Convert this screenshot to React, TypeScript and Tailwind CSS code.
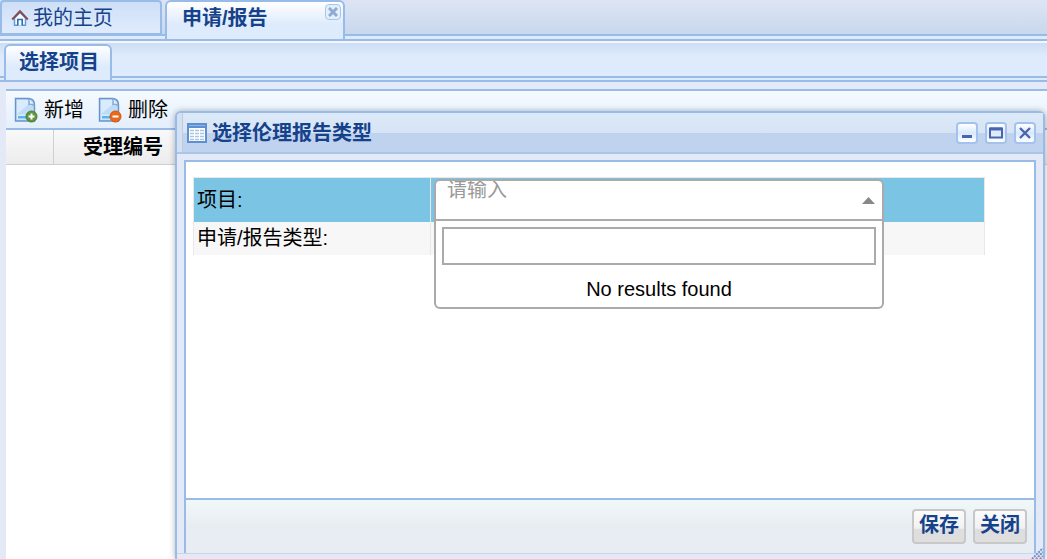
import type { ReactNode } from "react";

const HomeIcon = () => (
  <svg width="18" height="18" viewBox="0 0 18 18" fill="none" aria-hidden="true">
    <path d="M3.5 9V16.2H14.5V9L9 3.5Z" fill="#f3f9ff" stroke="#5f9ad6" strokeWidth="1.4" />
    <path d="M6.8 16.5V10.5H11.2V16.5" fill="#fff" stroke="#2f6db5" strokeWidth="1.6" />
    <path d="M1.2 10.500L9 2.200L16.800 10.500" stroke="#8a4a50" strokeWidth="2" />
  </svg>
);

const PageIcon = ({ color, dark, plus }: { color: string; dark: string; plus?: boolean }) => (
  <svg width="24" height="26" viewBox="0 0 24 26" fill="none" aria-hidden="true">
    <path d="M1.5 1.5H15Q20.500 2 20.500 8V24H1.5Z" fill="#bedcf8" stroke="#6a94c8" strokeWidth="1.4" />
    <path d="M3 3H14V8L3 17Z" fill="#d9ebfc" />
    <path d="M3 17.500H19V22.500H3Z" fill="#d8ecfc" />
    <path d="M4 19H17V21.500H4Z" fill="#58b4f0" />
    <path d="M14 1.5Q16 4 15 7.500Q18 6.500 20.500 9" fill="#f7fbff" stroke="#7fa6d6" strokeWidth="1.2" />
    <circle cx="17.500" cy="19.500" r="5.500" fill={color} stroke={dark} strokeWidth="1" />
    <path d={plus ? "M14.500 19.500H20.500M17.500 16.500V22.500" : "M14.500 19.500H20.500"} stroke="#fff" strokeWidth="2" />
  </svg>
);

const TableIcon = () => (
  <svg width="20" height="20" viewBox="0 0 20 20" fill="none" aria-hidden="true">
    <path d="M1 1H19V19H1Z" fill="#fff" stroke="#5d8fd1" strokeWidth="2" />
    <path d="M1 1H19V5H1Z" fill="#5d8fd1" />
    <path d="M2 2.500H18" stroke="#8db5ea" />
    <path d="M3 7.500H7M8 7.500H12M13 7.500H17M3 10.500H7M8 10.500H12M13 10.500H17M3 13.500H7M8 13.500H12M13 13.500H17M3 16.500H7M8 16.500H12M13 16.500H17" stroke="#a9c3e4" strokeWidth="1.4" />
  </svg>
);

const ToolButton = ({ label, children }: { label: string; children: ReactNode }) => (
  <button
    type="button"
    aria-label={label}
    className="flex h-[22px] w-[22px] items-center justify-center rounded border-2 border-[#a3c3ee] bg-linear-to-b from-white via-[#d9e9fb] to-white"
  >
    <svg className="shrink-0" width="16" height="16" viewBox="0 0 16 16" fill="none" stroke="#4a64b0">
      {children}
    </svg>
  </button>
);

const ActionButton = ({ children }: { children: ReactNode }) => (
  <button
    type="button"
    className="h-[35px] w-[54px] rounded border-2 border-[#c8c8c8] bg-linear-to-b from-[#fbfbfb] from-0% via-[#f1f1f1] via-55% to-[#dedede] to-60% pb-1 text-xl leading-7 font-bold whitespace-nowrap text-[#15428b]"
  >
    {children}
  </button>
);

const ProjectSelect = () => (
  <div className="relative w-[450px]">
    <label htmlFor="project" className="sr-only">
      项目
    </label>
    <select
      id="project"
      defaultValue=""
      className="block h-[42px] w-full appearance-none rounded-t-md border-2 border-[#aaa] bg-white pb-5 pl-[11px] text-xl leading-[18px] text-[#999] outline-none"
    >
      <option value="">请输入</option>
    </select>
    <svg className="pointer-events-none absolute top-[18px] right-[9px]" width="13" height="7" viewBox="0 0 13 7" aria-hidden="true">
      <path d="M0 7L6.500 0L13 7Z" fill="#888" />
    </svg>
    <div className="absolute top-full right-0 left-0 rounded-b-md border-2 border-t-0 border-[#aaa] bg-white px-1.5 pt-1.5">
      <input
        type="text"
        aria-label="搜索"
        className="block h-[38px] w-full border-2 border-[#aaa] px-2 text-xl outline-none"
      />
      <p className="pt-2.5 pb-1 text-center text-xl leading-7 text-black">No results found</p>
    </div>
  </div>
);

const ReportDialog = () => (
  <section
    role="dialog"
    aria-labelledby="dialog-title"
    className="absolute top-[111px] right-0.5 bottom-0 left-[175px] flex flex-col rounded-t-md border-2 border-b-0 border-[#99bbe8] bg-[#e3e9f6] shadow-[0_0_6px_rgba(0,0,0,0.3)]"
  >
    <header className="flex h-[41px] shrink-0 items-stretch rounded-t border-b-2 border-[#a9c5ea] bg-[#d3e1f3] pl-[5px]">
      <div className="flex flex-1 items-center gap-[5px] border-l border-[#c4cad3] bg-linear-to-b from-[#dce9f8] from-0% via-[#d6e4f5] via-50% to-[#bfd3ee] to-52% pr-[7px] pl-1">
        <TableIcon />
        <h2 id="dialog-title" className="flex-1 text-xl leading-7 font-bold text-[#15428b]">
          选择伦理报告类型
        </h2>
        <div className="flex gap-[7px]">
          <ToolButton label="最小化">
            <path d="M3 11.500H13" strokeWidth="3" />
          </ToolButton>
          <ToolButton label="最大化">
            <path d="M2 3.500H14V12.500H2Z" strokeWidth="2" />
            <path d="M2 4H14" strokeWidth="3" />
          </ToolButton>
          <ToolButton label="关闭窗口">
            <path d="M3 3L13 13M13 3L3 13" strokeWidth="2.4" />
          </ToolButton>
        </div>
      </div>
    </header>

    <div className="mx-[7px] mt-1.5 flex flex-1 flex-col border-2 border-b-0 border-[#99bbe8]">
      <div className="min-h-[336px] flex-1 bg-white pt-[15px] pl-[7px]">
        <table className="w-[792px] table-fixed border-collapse text-xl text-black">
          <tbody>
            <tr className="h-11 bg-[#7cc4e4]">
              <th scope="row" className="w-[237px] border border-b-0 border-[#e8e8e8] p-0 pl-[3px] text-left font-normal">
                项目:
              </th>
              <td className="border border-b-0 border-[#e8e8e8] py-0 pr-0 pl-[3px]">
                <ProjectSelect />
              </td>
            </tr>
            <tr className="h-[33px] bg-[#f7f7f7]">
              <th scope="row" className="border-x border-[#e8e8e8] p-0 pl-[3px] text-left leading-8 font-normal">
                申请/报告类型:
              </th>
              <td className="border-x border-[#e8e8e8] p-0" />
            </tr>
          </tbody>
        </table>
      </div>
      <footer className="flex h-[55px] shrink-0 items-center justify-end gap-[7px] border-t-2 border-[#99bbe8] bg-linear-to-b from-[#f1f8f8] to-[#e8edf3] to-50% pr-[7px]">
        <ActionButton>保存</ActionButton>
        <ActionButton>关闭</ActionButton>
      </footer>
    </div>

    <div className="flex h-1.5 shrink-0 items-end justify-end border-t border-[#ccd5e4]">
      <svg className="shrink-0" width="12" height="11" viewBox="0 0 12 11" fill="none" stroke="#6f8dc6" strokeWidth="2" strokeDasharray="2 1" aria-hidden="true">
        <path d="M1 11L12 0M5 11L12 4M9 11L12 8" />
      </svg>
    </div>
  </section>
);

export default function App() {
  return (
    <div className="relative flex min-h-screen flex-col overflow-hidden bg-[#e3e9f6] font-['Liberation_Sans','Noto_Sans_CJK_SC',sans-serif]">
      {/* main tabs */}
      <nav className="h-[41px] border-b-2 border-[#99bbe8] bg-[#deebfc]">
        <div className="flex h-9 items-start gap-[3px] border-b-2 border-[#99bbe8] bg-linear-to-b from-[#dde5f4] to-[#c8d8ed]">
          <a
            href="#home"
            className="flex h-[35px] w-[162px] items-center gap-1 rounded-t border-2 border-[#99bbe8] bg-linear-to-b from-[#cddff6] to-[#e0ecfd] pl-[9px] text-xl text-[#15428b]"
          >
            <HomeIcon />
            我的主页
          </a>
          <div className="flex h-[39px] w-[180px] shrink-0 items-start justify-between rounded-t-md border-2 border-b-0 border-[#99bbe8] bg-linear-to-b from-white to-[#deebfc] to-60% pt-0.5 pl-[15px]">
            <a href="#report" className="text-xl leading-7 font-bold text-[#15428b]">
              申请/报告
            </a>
            <button
              type="button"
              aria-label="关闭标签"
              className="mr-0.5 flex h-4 w-4 items-center justify-center rounded border border-[#a9c5ea] bg-[#e3effd]"
            >
              <svg width="10" height="10" viewBox="0 0 10 10" stroke="#8fabd3" strokeWidth="3">
                <path d="M1 1L9 9M9 1L1 9" />
              </svg>
            </button>
          </div>
        </div>
      </nav>

      {/* sub tabs */}
      <nav className="h-[41px] border-t-2 border-b-2 border-t-[#f4f8fe] border-b-[#99bbe8] bg-[#deebfc]">
        <div className="flex h-[35px] items-start border-b-2 border-[#99bbe8] bg-linear-to-b from-[#cddef5] to-[#deebfc] to-40% pl-1">
          <a
            href="#select"
            className="mt-px h-9 w-[108px] rounded-t-md border-2 border-b-0 border-[#99bbe8] bg-linear-to-b from-white to-[#deebfc] to-60% pl-[13px] text-xl leading-8 font-bold text-[#15428b]"
          >
            选择项目
          </a>
        </div>
      </nav>

      <main className="mt-[7px] ml-1.5 flex-1 border-t-2 border-[#99bbe8] bg-white">
        <div className="flex h-[39px] items-center gap-3.5 border-b-2 border-[#99bbe8] bg-linear-to-b from-[#f5faff] to-[#e4effc] pl-2 text-xl text-black">
          <button type="button" className="flex items-center gap-1.5">
            <PageIcon color="#5f9440" dark="#4a7a30" plus />
            新增
          </button>
          <button type="button" className="flex items-center gap-1.5">
            <PageIcon color="#ea6a1c" dark="#c9540f" />
            删除
          </button>
        </div>
        <table className="w-full table-fixed border-collapse text-xl text-black">
          <thead>
            <tr className="h-[34px] bg-linear-to-b from-[#f9f9f9] to-[#ececee]">
              <th className="w-[47px] border-r border-b border-[#d0d0d0] p-0" />
              <th className="w-[140px] border-r border-b border-[#d0d0d0] p-0 font-bold">受理编号</th>
              <th className="border-b border-[#d0d0d0] p-0" />
            </tr>
          </thead>
        </table>
      </main>

      <ReportDialog />
    </div>
  );
}
